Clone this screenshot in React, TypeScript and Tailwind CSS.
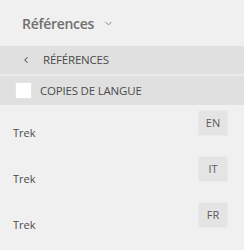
import { ChevronDown, ChevronLeft } from 'lucide-react';

const languages = ['EN', 'IT', 'FR'];

export default function App() {
	return (
		<div className="w-[244px] h-[250px] bg-[#f0f0f0] font-['Open_Sans',sans-serif] overflow-hidden">
			<div className="h-[46px] flex items-center pl-[22px] gap-[9px]">
				<span className="text-[14px] font-semibold text-[#707070] tracking-[-0.3px]">Références</span>
				<ChevronDown size={11} strokeWidth={1.75} className="text-[#707070] mt-[1px]" />
			</div>

			<div className="h-[28px] bg-[#e0e0e0] flex items-center pl-[21px]">
				<ChevronLeft size={10} strokeWidth={2.5} className="text-[#505050]" />
				<span className="ml-[12px] text-[11.5px] text-[#4b4b4b] tracking-[-0.2px]">RÉFÉRENCES</span>
			</div>
			<div className="h-[2px] bg-[#ebebeb]" />
			<div className="h-[29px] bg-[#e0e0e0] flex items-center pl-[15px]">
				<div className="w-[17px] h-[17px] bg-white border border-[#e4e4e4]" />
				<span className="ml-[8px] text-[11.5px] font-medium text-[#4b4b4b] tracking-[-0.2px]">COPIES DE LANGUE</span>
			</div>

			<div className="flex flex-col">
				{languages.map((lang) => (
					<div key={lang} className="h-[46px] flex items-start justify-between pl-[13px] pr-[16px] pt-[5px]">
						<span className="mt-[15px] text-[11px] text-[#4b4b4b]">Trek</span>
						<span className="w-[30px] h-[26px] flex items-center justify-center bg-[#e4e4e4] border border-[#ebebeb] rounded-[2px] text-[11px] text-[#5a5a5a]">
							{lang}
						</span>
					</div>
				))}
			</div>
		</div>
	);
}
